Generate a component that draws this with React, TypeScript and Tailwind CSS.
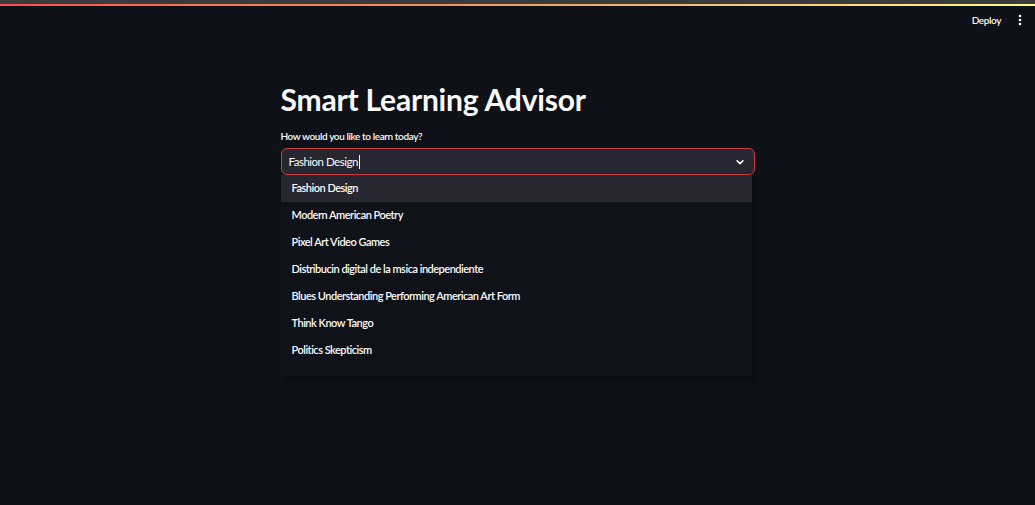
import React, { useState } from 'react';

const topics = [
  'Fashion Design',
  'Modern American Poetry',
  'Pixel Art Video Games',
  'Distribucin digital de la msica independiente',
  'Blues Understanding Performing American Art Form',
  'Think Know Tango',
  'Politics Skepticism',
];

const font = { fontFamily: 'Lato, "Noto Sans", sans-serif' };

export default function App() {
  const [value] = useState('Fashion Design');

  return (
    <div className="h-[505px] w-full overflow-hidden bg-[#0e1117] text-[#fafafa]" style={font}>
      <div className="h-[4px] bg-[#3a3b3f]" />
      <div className="h-[2px] bg-gradient-to-r from-[#ff4b4b] via-[#f0a15f] to-[#fffd80]" />

      <header className="flex h-[28px] items-center justify-end gap-[17px] pr-[13px]">
        <span className="text-[10px] font-semibold tracking-[-0.4px] text-[#fafafa]">Deploy</span>
        <svg width="4" height="12" viewBox="0 0 4 12" className="fill-[#fafafa]">
          <circle cx="2" cy="2" r="1.3" />
          <circle cx="2" cy="6" r="1.3" />
          <circle cx="2" cy="10" r="1.3" />
        </svg>
      </header>

      <main className="mx-auto mt-[45px] w-[474px]">
        <h1 className="text-[30px] font-bold leading-[40px] tracking-[-0.2px]">Smart Learning Advisor</h1>
        <label className="mt-[10px] block text-[10px] font-semibold leading-[14px] tracking-[-0.4px]">
          How would you like to learn today?
        </label>

        <div className="relative mt-[5px]">
          <div className="flex h-[27px] items-center rounded-[6px] border border-[#d03a3f] bg-[#262730] pl-[7px] pr-[9px]">
            <span className="text-[11.5px] tracking-[-0.5px]">{value}</span>
            <span className="ml-[1px] h-[14px] w-px bg-[#fafafa]" />
            <svg className="ml-auto" width="10" height="10" viewBox="0 0 24 24" fill="none" stroke="#fafafa" strokeWidth="4" strokeLinecap="round" strokeLinejoin="round">
              <path d="M5 9l7 7 7-7" />
            </svg>
          </div>

          <ul className="mr-[3px] bg-[#0f1219] pb-[12px] shadow-[4px_4px_6px_rgba(0,0,0,0.35)]">
            {topics.map((t, i) => (
              <li
                key={t}
                className={
                  'flex h-[27px] items-center pl-[11px] text-[11px] font-semibold tracking-[-0.5px] ' +
                  (i === 0 ? 'bg-[#262730]' : '')
                }
              >
                {t}
              </li>
            ))}
          </ul>
        </div>
      </main>
    </div>
  );
}
